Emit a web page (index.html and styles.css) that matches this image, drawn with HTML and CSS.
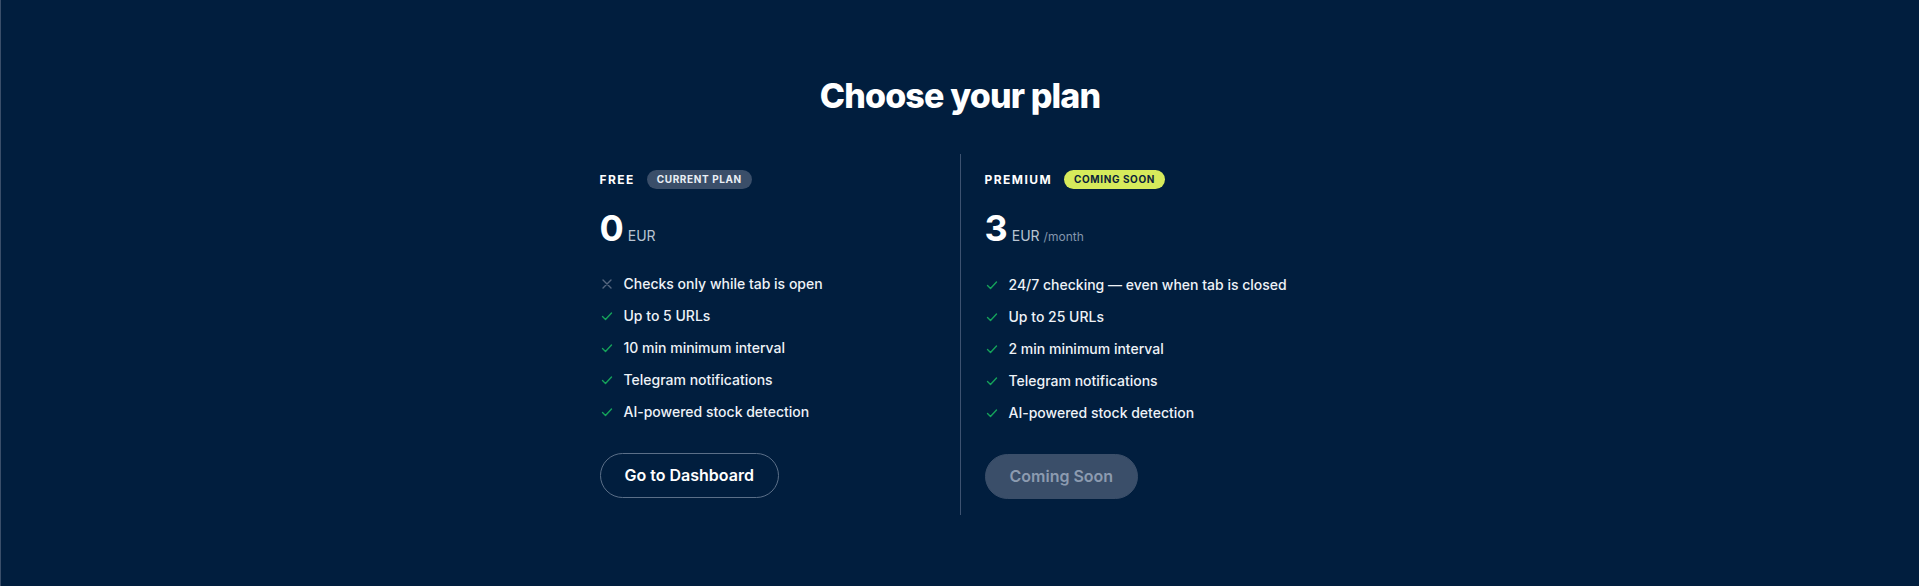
FILE: index.html
```html
<!DOCTYPE html>
<html lang="en">
<head>
<meta charset="utf-8">
<title>Choose your plan</title>
<link rel="stylesheet" href="styles.css">
</head>
<body>
<main class="page">
  <h1 class="title">Choose your plan</h1>
  <div class="plans">
    <section class="plan plan-free">
      <div class="plan-head">
        <span class="plan-name">FREE</span>
        <span class="badge badge-current">CURRENT PLAN</span>
      </div>
      <div class="price"><span class="amount">0</span><span class="currency">EUR</span></div>
      <ul class="features">
        <li class="feature off"><svg class="icon" viewBox="0 0 14 14"><path d="M3 3L11 11M11 3L3 11"/></svg><span>Checks only while tab is open</span></li>
        <li class="feature"><svg class="icon" viewBox="0 0 14 14"><path d="M2.5 7.5L5.5 10.5L11.5 4"/></svg><span>Up to 5 URLs</span></li>
        <li class="feature"><svg class="icon" viewBox="0 0 14 14"><path d="M2.5 7.5L5.5 10.5L11.5 4"/></svg><span>10 min minimum interval</span></li>
        <li class="feature"><svg class="icon" viewBox="0 0 14 14"><path d="M2.5 7.5L5.5 10.5L11.5 4"/></svg><span>Telegram notifications</span></li>
        <li class="feature"><svg class="icon" viewBox="0 0 14 14"><path d="M2.5 7.5L5.5 10.5L11.5 4"/></svg><span>AI-powered stock detection</span></li>
      </ul>
      <div class="actions"><button class="btn btn-outline">Go to Dashboard</button></div>
    </section>
    <section class="plan plan-premium">
      <div class="plan-head">
        <span class="plan-name">PREMIUM</span>
        <span class="badge badge-soon">COMING SOON</span>
      </div>
      <div class="price"><span class="amount">3</span><span class="currency">EUR</span><span class="period">/month</span></div>
      <ul class="features">
        <li class="feature"><svg class="icon" viewBox="0 0 14 14"><path d="M2.5 7.5L5.5 10.5L11.5 4"/></svg><span>24/7 checking — even when tab is closed</span></li>
        <li class="feature"><svg class="icon" viewBox="0 0 14 14"><path d="M2.5 7.5L5.5 10.5L11.5 4"/></svg><span>Up to 25 URLs</span></li>
        <li class="feature"><svg class="icon" viewBox="0 0 14 14"><path d="M2.5 7.5L5.5 10.5L11.5 4"/></svg><span>2 min minimum interval</span></li>
        <li class="feature"><svg class="icon" viewBox="0 0 14 14"><path d="M2.5 7.5L5.5 10.5L11.5 4"/></svg><span>Telegram notifications</span></li>
        <li class="feature"><svg class="icon" viewBox="0 0 14 14"><path d="M2.5 7.5L5.5 10.5L11.5 4"/></svg><span>AI-powered stock detection</span></li>
      </ul>
      <div class="actions"><button class="btn btn-disabled" disabled>Coming Soon</button></div>
    </section>
  </div>
</main>
</body>
</html>
```
FILE: styles.css
```css
* { box-sizing: border-box; }
html, body { margin: 0; padding: 0; }
body {
  background: #011e3e;
  color: #ffffff;
  font-family: Inter, "Noto Sans", "Liberation Sans", sans-serif;
  min-height: 586px;
  border-left: 1px solid #3a4e69;
}
.page {
  padding-top: 76px;
  display: flex;
  flex-direction: column;
  align-items: center;
}
.title {
  margin: 0 0 38px;
  font-size: 34px;
  line-height: 40px;
  font-weight: 800;
  letter-spacing: -0.025em;
  color: #ffffff;
}
.plans {
  display: grid;
  grid-template-columns: 360px 360px;
  width: 720px;
  margin-left: -1px;
}
.plan {
  padding: 16px 24px 16px 0;
}
.plan-premium {
  border-left: 1px solid #3d5270;
  padding-left: 24px;
}
.plan-head {
  display: flex;
  align-items: center;
  gap: 12px;
  height: 19px;
}
.plan-name {
  font-size: 12px;
  font-weight: 700;
  letter-spacing: 0.12em;
  color: #ffffff;
}
.badge {
  display: inline-block;
  font-size: 10px;
  line-height: 15px;
  font-weight: 700;
  letter-spacing: 0.06em;
  padding: 2px 10px;
  border-radius: 999px;
}
.badge-current { background: #3a4e69; color: #e9eef5; }
.badge-soon { background: #d6ea5b; color: #0b1f3a; }
.price {
  margin-top: 19px;
  display: flex;
  align-items: baseline;
  line-height: 40px;
}
.amount {
  font-size: 36px;
  font-weight: 700;
  color: #ffffff;
}
.currency {
  font-size: 14px;
  margin-left: 4px;
  color: #b9c4d2;
}
.period {
  font-size: 12px;
  margin-left: 4px;
  color: #8496ad;
}
.features {
  list-style: none;
  margin: 18px 0 0;
  padding: 0;
  display: flex;
  flex-direction: column;
  gap: 12px;
}
.feature {
  display: flex;
  align-items: center;
  gap: 10px;
  font-size: 14px;
  font-weight: 500;
  line-height: 20px;
  color: #eef2f7;
}
.icon {
  width: 14px;
  height: 14px;
  flex: none;
  fill: none;
  stroke: #15a25a;
  stroke-width: 1.4;
  stroke-linecap: round;
  stroke-linejoin: round;
}
.feature.off .icon { stroke: #56677f; }
.actions { margin-top: 31px; }
.btn {
  font-family: inherit;
  font-size: 16px;
  font-weight: 600;
  line-height: 19px;
  padding: 12px 24px;
  border-radius: 999px;
  border: 1px solid #5b6f88;
  background: transparent;
  color: #ffffff;
}
.btn-disabled {
  background: #3a4e69;
  border-color: #3a4e69;
  color: #8c9bb0;
}
```
